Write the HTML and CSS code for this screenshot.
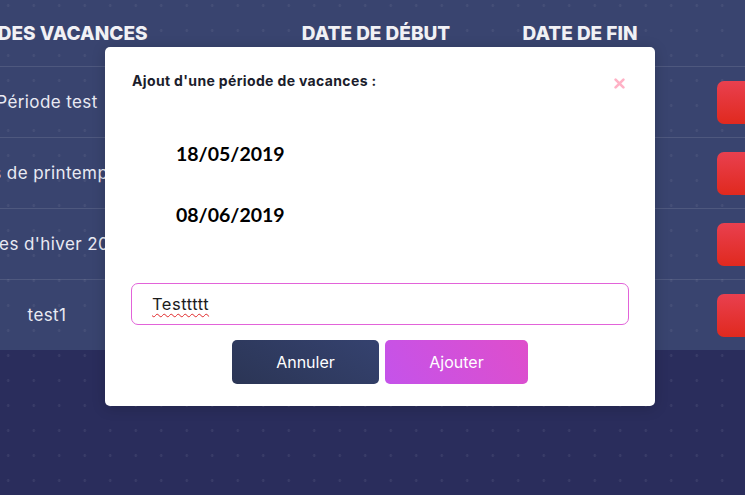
FILE: index.html
```html
<!DOCTYPE html>
<html lang="fr">
<head>
<meta charset="utf-8">
<title>Vacances</title>
<link rel="stylesheet" href="styles.css">
</head>
<body>
<div class="page">
  <div class="table">
    <div class="row head">
      <div class="c1">NOM DES VACANCES</div>
      <div class="c2">DATE DE DÉBUT</div>
      <div class="c3">DATE DE FIN</div>
      <div class="c4"></div>
    </div>
    <div class="row">
      <div class="c1">Période test</div>
      <div class="c2">18/05/2019</div>
      <div class="c3">08/06/2019</div>
      <div class="c4"><button class="del">Supprimer</button></div>
    </div>
    <div class="row">
      <div class="c1">Vacances de printemps 2019-20</div>
      <div class="c2">13/04/2019</div>
      <div class="c3">28/04/2019</div>
      <div class="c4"><button class="del">Supprimer</button></div>
    </div>
    <div class="row">
      <div class="c1">Vacances d'hiver 2019-20</div>
      <div class="c2">16/02/2019</div>
      <div class="c3">03/03/2019</div>
      <div class="c4"><button class="del">Supprimer</button></div>
    </div>
    <div class="row">
      <div class="c1">test1</div>
      <div class="c2">01/01/2019</div>
      <div class="c3">02/01/2019</div>
      <div class="c4"><button class="del">Supprimer</button></div>
    </div>
  </div>

  <div class="modal">
    <div class="modal-head">
      <h2 class="modal-title">Ajout d'une période de vacances :</h2>
      <span class="close"><svg width="11" height="11" viewBox="0 0 11 11"><path d="M1.6 1.6 L9.4 9.4 M9.4 1.6 L1.6 9.4" stroke="#ffb2c6" stroke-width="2.6" stroke-linecap="round"/></svg></span>
    </div>
    <div class="dates">
      <div class="date">18/05/2019</div>
      <div class="date">08/06/2019</div>
    </div>
    <div class="field"><span class="typed">Testtttt</span></div>
    <div class="actions">
      <button class="btn cancel">Annuler</button>
      <button class="btn add">Ajouter</button>
    </div>
  </div>
</div>
</body>
</html>
```

FILE: styles.css
```css
* { box-sizing: border-box; }
html, body {
  margin: 0;
  padding: 0;
  width: 745px;
  height: 495px;
  overflow: hidden;
}
body {
  background-color: #2a2d5c;
  background-image: radial-gradient(circle, rgba(255,255,255,0.07) 1.2px, transparent 1.6px);
  background-size: 25.5px 25px;
  background-position: -4.5px -7px;
  font-family: Inter, "Noto Sans", sans-serif;
}
.page {
  position: relative;
  width: 745px;
  height: 495px;
}
.table {
  width: 900px;
  margin-left: -80px;
  background-color: #39446f;
  background-image: radial-gradient(circle, rgba(255,255,255,0.06) 1.2px, transparent 1.6px);
  background-size: 25.5px 25px;
  background-position: 75.5px -7px;
}
.row {
  display: grid;
  grid-template-columns: 254px 318px 176px 1fr;
  align-items: center;
  height: 71px;
  border-top: 1px solid rgba(255,255,255,0.11);
  color: #e9eaf3;
  font-size: 17px;
  letter-spacing: 0.4px;
}
.row.head {
  height: 66px;
  border-top: none;
  font-weight: 800;
  font-size: 19px;
  letter-spacing: 0;
  color: #f1f1f5;
}
.c1, .c2, .c3 { text-align: center; white-space: nowrap; overflow: visible; }
.c2 { padding-left: 86px; }
.c4 { padding-left: 49px; }
.del {
  display: block;
  height: 43px;
  width: 130px;
  border: none;
  border-radius: 7px;
  background: linear-gradient(180deg, #e9404f 0%, #e0291e 100%);
  color: #fff;
  font-family: Inter, sans-serif;
  font-size: 14px;
  padding: 0 0 0 52px;
  text-align: left;
}
.modal {
  position: absolute;
  left: 105px;
  top: 47px;
  width: 550px;
  height: 359px;
  background: #fff;
  border-radius: 5px;
  box-shadow: 0 2px 14px rgba(0,0,0,0.18);
  padding: 25px 26px 22px 26px;
  display: flex;
  flex-direction: column;
}
.modal-head {
  display: flex;
  justify-content: space-between;
  align-items: flex-start;
  padding-left: 1px;
}
.modal-title {
  margin: 0;
  font-size: 14px;
  font-weight: 700;
  letter-spacing: 0.35px;
  color: #1b1d2c;
  line-height: 18px;
}
.close {
  margin-top: 6px;
  margin-right: 4px;
  display: flex;
}
.dates {
  padding-left: 45px;
  margin-top: 51px;
  display: flex;
  flex-direction: column;
  gap: 35px;
}
.date {
  font-family: Lato, "Open Sans", sans-serif;
  font-weight: 700;
  font-size: 19.5px;
  line-height: 26px;
  color: #000;
}
.field {
  margin-top: 55px;
  height: 42px;
  border: 1px solid #e263d9;
  border-radius: 7px;
  display: flex;
  align-items: center;
  padding-left: 20px;
}
.typed {
  font-size: 16.5px;
  letter-spacing: 0.5px;
  color: #1c1c1c;
  text-decoration: underline wavy #e0282a;
  text-decoration-thickness: 1px;
  text-underline-offset: 3px;
}
.actions {
  margin-top: 15px;
  display: flex;
  justify-content: center;
  gap: 6px;
}
.btn {
  height: 44px;
  border: none;
  border-radius: 5px;
  color: #fff;
  font-family: Inter, sans-serif;
  font-size: 16px;
}
.cancel {
  width: 147px;
  background: linear-gradient(30deg, #2b3555 0%, #35426f 100%);
}
.add {
  width: 143px;
  background: linear-gradient(60deg, #c453ea 0%, #df4ecb 100%);
}
```
